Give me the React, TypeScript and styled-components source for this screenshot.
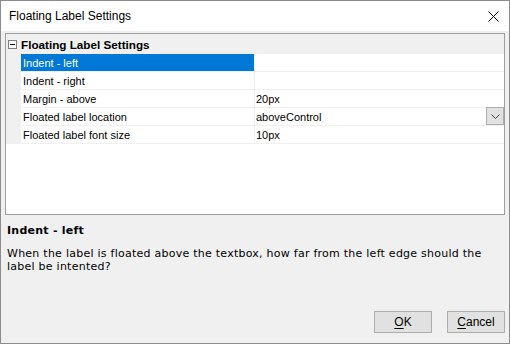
import * as React from "react"
import styled, { createGlobalStyle } from "styled-components"

const GlobalStyle = createGlobalStyle`
  html, body {
    margin: 0;
    padding: 0;
    background: #ffffff;
  }
  * {
    box-sizing: border-box;
  }
`

const uiFont = `"Segoe UI", "Liberation Sans", Arial, sans-serif`
const descFont = `Tahoma, "DejaVu Sans", sans-serif`

const Window = styled.div`
  width: 510px;
  height: 344px;
  border: 1px solid #8c8c8c;
  display: flex;
  flex-direction: column;
  font-family: ${uiFont};
  font-size: 12px;
  color: #000;
  background: #f0f0f0;
`

const TitleBar = styled.div`
  height: 30px;
  background: #ffffff;
  display: flex;
  align-items: center;
  justify-content: space-between;
  padding: 0 10px 0 8px;
  flex-shrink: 0;
`

const TitleText = styled.span`
  font-size: 12px;
`

const CloseButton = styled.div`
  width: 12px;
  height: 12px;
  display: flex;
  align-items: center;
  justify-content: center;
`

const Body = styled.div`
  flex: 1;
  display: flex;
  flex-direction: column;
  padding: 2px 4px 10px 4px;
`

const Grid = styled.div`
  height: 182px;
  border: 1px solid #a0a0a0;
  background: #ffffff;
  display: flex;
  flex-direction: column;
  font-size: 11px;
`

const CategoryRow = styled.div`
  height: 20px;
  background: #f0f0f0;
  display: flex;
  align-items: center;
  padding-top: 1px;
`

const Expander = styled.div`
  width: 9px;
  height: 9px;
  margin: 0 4px 0 2px;
  border: 1px solid #808080;
  background: #ffffff;
  position: relative;
  &::after {
    content: "";
    position: absolute;
    left: 1px;
    right: 1px;
    top: 3px;
    height: 1px;
    background: #000;
  }
`

const CategoryText = styled.span`
  font-weight: bold;
  font-size: 11.7px;
`

const Row = styled.div`
  height: 18px;
  display: flex;
  border-bottom: 1px solid #f0f0f0;
`

const Margin = styled.div`
  width: 15px;
  background: #f0f0f0;
  flex-shrink: 0;
`

const NameCell = styled.div<{ $selected?: boolean }>`
  width: 234px;
  flex-shrink: 0;
  display: flex;
  align-items: center;
  padding-left: 2px;
  border-right: 1px solid #f0f0f0;
  background: ${(p) => (p.$selected ? "#0078d7" : "#ffffff")};
  color: ${(p) => (p.$selected ? "#ffffff" : "#000000")};
`

const ValueCell = styled.div`
  flex: 1;
  display: flex;
  align-items: center;
  justify-content: space-between;
  padding-left: 1px;
`

const DropButton = styled.div`
  width: 18px;
  height: 18px;
  margin-top: -1px;
  align-self: flex-start;
  background: #e1e1e1;
  border: 1px solid #adadad;
  display: flex;
  align-items: center;
  justify-content: center;
`

const Description = styled.div`
  flex: 1;
  padding: 9px 2px 0 2px;
  font-family: ${descFont};
  font-size: 11px;
  letter-spacing: 0.25px;
`

const DescTitle = styled.div`
  font-weight: bold;
  margin-bottom: 10px;
`

const DescText = styled.div`
  line-height: 13px;
  width: 490px;
`

const ButtonRow = styled.div`
  display: flex;
  justify-content: flex-end;
  gap: 15px;
`

const Button = styled.div`
  width: 58px;
  height: 22px;
  background: #e1e1e1;
  border: 1px solid #adadad;
  display: flex;
  align-items: center;
  justify-content: center;
  u {
    text-decoration: underline;
    text-underline-offset: 2px;
  }
`

const rows = [
  { name: "Indent - left", value: "", selected: true },
  { name: "Indent - right", value: "" },
  { name: "Margin - above", value: "20px" },
  { name: "Floated label location", value: "aboveControl", dropdown: true },
  { name: "Floated label font size", value: "10px" },
]

const App: React.FC = () => (
  <>
    <GlobalStyle />
    <Window>
      <TitleBar>
        <TitleText>Floating Label Settings</TitleText>
        <CloseButton>
          <svg width="11" height="11" viewBox="0 0 11 11">
            <path d="M0.5 0.5 L10.5 10.5 M10.5 0.5 L0.5 10.5" stroke="#000" strokeWidth="1" />
          </svg>
        </CloseButton>
      </TitleBar>
      <Body>
        <Grid>
          <CategoryRow>
            <Expander />
            <CategoryText>Floating Label Settings</CategoryText>
          </CategoryRow>
          {rows.map((r) => (
            <Row key={r.name}>
              <Margin />
              <NameCell $selected={r.selected}>{r.name}</NameCell>
              <ValueCell>
                <span>{r.value}</span>
                {r.dropdown && (
                  <DropButton>
                    <svg width="9" height="5" viewBox="0 0 9 5">
                      <path d="M0.5 0.5 L4.5 4.5 L8.5 0.5" stroke="#444" strokeWidth="1" fill="none" />
                    </svg>
                  </DropButton>
                )}
              </ValueCell>
            </Row>
          ))}
        </Grid>
        <Description>
          <DescTitle>Indent - left</DescTitle>
          <DescText>
            When the label is floated above the textbox, how far from the left edge should the label be intented?
          </DescText>
        </Description>
        <ButtonRow>
          <Button>
            <span><u>O</u>K</span>
          </Button>
          <Button>
            <span><u>C</u>ancel</span>
          </Button>
        </ButtonRow>
      </Body>
    </Window>
  </>
)

export default App
